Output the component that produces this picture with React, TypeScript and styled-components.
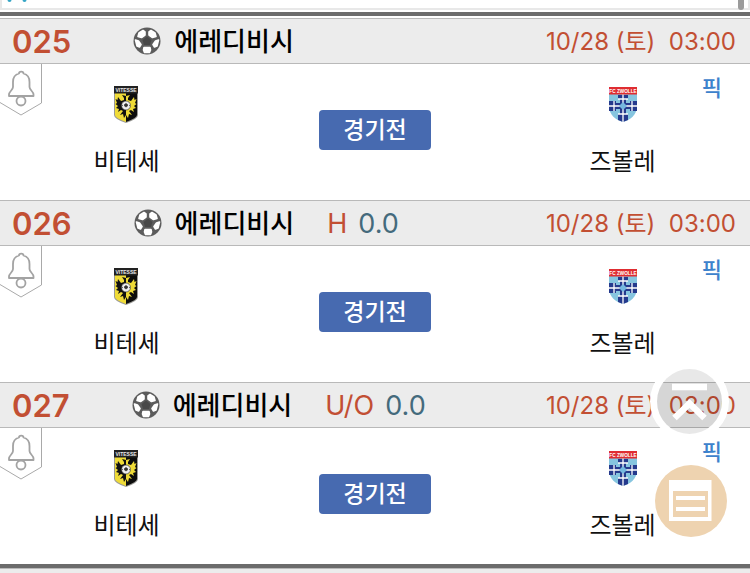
import React from "react";
import styled, { createGlobalStyle, css } from "styled-components";

const GlobalStyle = createGlobalStyle`
  * { box-sizing: border-box; }
  body {
    margin: 0;
    background: #fff;
    font-family: Inter, "Noto Sans CJK KR", sans-serif;
    overflow: hidden;
  }
`;

const TopStrip = styled.div`
  position: relative;
  height: 12px;
  background: #fff;
  overflow: hidden;
`;

const TopPanel = styled.div`
  height: 10px;
  border-left: 2px solid #e8e8e8;
  border-right: 2px solid #e8e8e8;
  border-bottom: 2px solid #e8e8e8;
  svg { display: block; margin-left: 5px; }
`;

const ScrollThumb = styled.div`
  position: absolute;
  top: 0;
  right: 6px;
  width: 6px;
  height: 10px;
  border-radius: 0 0 3px 3px;
  background: #9b9b9b;
`;

const Divider = styled.div`
  height: 4px;
  background: #6c6c6c;
`;

const List = styled.main`
  padding-top: 2px;
`;

const Header = styled.header`
  display: flex;
  align-items: center;
  height: 46px;
  padding: 0 14px 0 12px;
  background: #ececec;
  border-top: 1px solid #b9b9b9;
  border-bottom: 1px solid #b9b9b9;
  white-space: nowrap;
`;

const headerText = css`
  padding-top: 2px;
  line-height: 44px;
`;

const Num = styled.span`
  ${headerText}
  font-size: 31px;
  font-weight: 600;
  color: #c24f33;
  margin-right: 62px;
`;

const League = styled.h2`
  ${headerText}
  margin: 0 33px 0 13px;
  font-size: 26px;
  font-weight: 500;
  color: #000;
`;

const Kind = styled.span`
  ${headerText}
  font-size: 27px;
  color: #c24f33;
  margin-right: 11px;
`;

const Line = styled.span`
  ${headerText}
  font-size: 27px;
  color: #446a7c;
`;

const When = styled.time`
  ${headerText}
  margin-left: auto;
  font-size: 24px;
  color: #c24f33;
  white-space: pre;
`;

const Body = styled.div`
  position: relative;
  display: grid;
  grid-template-columns: 1fr 112px 1fr;
  align-items: start;
  height: 136px;
`;

const BellButton = styled.button`
  position: absolute;
  left: 0;
  top: 0;
  padding: 0;
  border: 0;
  background: none;
  svg { display: block; }
`;

const Team = styled.div<{ $away?: boolean }>`
  display: flex;
  flex-direction: column;
  align-items: center;
  padding: ${(p) => (p.$away ? "20px 65px 0 129px" : "20px 66px 0 0")};
  font-size: 24px;
  line-height: 34px;
  color: #111;
  svg { display: block; margin-bottom: 21px; }
`;

const Status = styled.button`
  height: 40px;
  margin-top: 46px;
  padding: 0;
  border: 0;
  border-radius: 4px;
  background: #476ab0;
  color: #fff;
  font-family: inherit;
  font-size: 23px;
  line-height: 40px;
  font-weight: 500;
`;

const Pick = styled.a`
  position: absolute;
  top: 8px;
  right: 28px;
  font-size: 22px;
  line-height: 32px;
  font-weight: 500;
  color: #3d82cc;
  text-decoration: none;
`;

const Floating = styled.div`
  position: fixed;
  right: 20px;
  top: 361px;
  display: flex;
  flex-direction: column;
  align-items: center;
  gap: 24px;
`;

const RoundButton = styled.button`
  padding: 0;
  border: 0;
  background: none;
  svg { display: block; }
`;

const NextHeader = styled.div`
  height: 5px;
  background: #ececec;
  border-top: 1px solid #b9b9b9;
`;

function Ball() {
  return (
    <svg width="28" height="28" viewBox="0 0 28 28" aria-hidden="true">
      <circle cx="14" cy="14" r="13.500" fill="#5c5c5c" />
      <g fill="#fff" stroke="#fff" strokeWidth="1.600" strokeLinejoin="round">
        <path d="M6 6 10 3.500 12 5 12 8 8.500 10.500 5 9.500Z" />
        <path d="M22 6 18 3.500 16 5 16 8 19.500 10.500 23 9.500Z" />
        <path d="M2.500 13 5.500 14 8 17.500 6.500 20 4 19Z" />
        <path d="M25.500 13 22.500 14 20 17.500 21.500 20 24 19Z" />
        <path d="M11 20.500H17L17.500 23 16.500 25.500H11.500L10.500 23Z" />
      </g>
      <path d="M14 9.500 18.500 13 17 18H11L9.500 13Z" fill="#484848" />
    </svg>
  );
}

function Bell() {
  return (
    <svg width="42" height="52" viewBox="0 0 42 52" fill="none" aria-hidden="true">
      <path d="M41.500 0V39L21 51 0 38.500" stroke="#a9a9a9" />
      <path
        d="M19 9.500C19 7 23.500 7 23.500 9.500 27.500 10.500 29.500 14 29.500 18V23C29.500 26 33.500 27.500 33.500 30.500V32H9V30.500C9 27.500 13 26 13 23V18C13 14 15 10.500 19 9.500Z"
        stroke="#a3a3a3"
        strokeWidth="1.800"
        strokeLinejoin="round"
      />
      <circle cx="21" cy="37" r="4.500" stroke="#a3a3a3" strokeWidth="1.800" />
    </svg>
  );
}

function VitesseCrest() {
  return (
    <svg width="26" height="40" viewBox="0 0 26 40" role="img" aria-label="Vitesse">
      <path d="M0 2H24V31Q24 35 12 39 0 35 0 31Z" fill="#9a9a96" />
      <path d="M1 9H12V38Q1 34 1 31Z" fill="#f0dc38" />
      <path d="M12 9H23V31Q23 34 12 38Z" fill="#0c0c0c" />
      <path d="M0 2H24V9.500H0Z" fill="#222" />
      <text x="12" y="8" fontSize="5" fontWeight="700" fill="#e8e8e8" textAnchor="middle" fontFamily="Liberation Sans">VITESSE</text>
      <path d="M12 12 8 11 10 14V16L7 17 4 13 3.500 16 1.500 15 3 19 1.500 20 4 22 2 24 5 25 4 28 7 26 9 27 6 31 9 30 10 34 12 31Z" fill="#111" />
      <path d="M12 12 16 11 14 14V16L17 17 20 13 20.500 16 22.500 15 21 19 22.500 20 20 22 22 24 19 25 20 28 17 26 15 27 18 31 15 30 14 34 12 31Z" fill="#eeda36" />
      <circle cx="12" cy="21.500" r="4.500" fill="#eee" stroke="#222" strokeWidth="0.600" />
      <path d="M10.500 20.500 12 19.500 13.500 20.500V22L12 23 10.500 22ZM8 21.500H9M15 21.500H16" fill="#333" stroke="#333" strokeWidth="0.700" />
    </svg>
  );
}

function ZwolleCrest() {
  return (
    <svg width="30" height="40" viewBox="0 0 30 40" role="img" aria-label="FC Zwolle">
      <path d="M1 10H29V22C29 31 22 36 15 38 8 36 1 31 1 22Z" fill="#86c5df" />
      <path d="M10 11H20V15H18V19H22V17H29V27H22V25H18V30H20V36L15 38 10 36V30H12V25H8V27H1V17H8V19H12V15H10Z" fill="#253a8d" />
      <path d="M15 10V19M15 25V38M1 22H12M18 22H29M10 15H20M10 30H20M6 17V27M24 17V27" stroke="#fff" strokeWidth="1.300" fill="none" />
      <path d="M15 18 19 22 15 26 11 22Z" fill="#75b8df" />
      <rect x="1" y="3" width="28" height="7.500" fill="#df2d31" />
      <text x="15" y="8.500" fontSize="4.700" fontWeight="700" fill="#fff" textAnchor="middle" fontFamily="Liberation Sans">FC ZWOLLE</text>
    </svg>
  );
}

interface Match {
  no: string;
  kind?: string;
  line?: string;
}

const matches: Match[] = [
  { no: "025" },
  { no: "026", kind: "H", line: "0.0" },
  { no: "027", kind: "U/O", line: "0.0" },
];

function MatchItem({ no, kind, line }: Match) {
  return (
    <article>
      <Header>
        <Num>{no}</Num>
        <Ball />
        <League>에레디비시</League>
        {kind && <Kind>{kind}</Kind>}
        {line && <Line>{line}</Line>}
        <When>{"10/28 (토)  03:00"}</When>
      </Header>
      <Body>
        <BellButton aria-label="알림"><Bell /></BellButton>
        <Team>
          <VitesseCrest />
          비테세
        </Team>
        <Status>경기전</Status>
        <Team $away>
          <ZwolleCrest />
          즈볼레
        </Team>
        <Pick href="#">픽</Pick>
      </Body>
    </article>
  );
}

export default function App() {
  return (
    <>
      <GlobalStyle />
      <TopStrip>
        <TopPanel>
          <svg width="20" height="3" viewBox="0 0 20 3" aria-hidden="true">
            <circle cx="2.500" cy="0" r="2" fill="#35a5c5" />
            <circle cx="17.500" cy="0" r="2" fill="#35a5c5" />
          </svg>
        </TopPanel>
        <ScrollThumb />
      </TopStrip>
      <Divider />
      <List>
        {matches.map((m) => (
          <MatchItem key={m.no} {...m} />
        ))}
      </List>
      <Divider />
      <NextHeader />
      <Floating>
        <RoundButton aria-label="맨 위로">
          <svg width="80" height="80" viewBox="0 0 80 80" fill="none">
            <circle cx="39.500" cy="40.500" r="36" stroke="#fff" strokeWidth="7" />
            <circle cx="39.500" cy="40.500" r="32.500" fill="#000" fillOpacity="0.09" />
            <path d="M22 26H57M24.500 57 39.500 42.500 54.500 57" stroke="#fff" strokeWidth="6.500" />
          </svg>
        </RoundButton>
        <RoundButton aria-label="목록">
          <svg width="74" height="73" viewBox="0 0 74 73">
            <circle cx="38" cy="36" r="36" fill="#eed3b0" />
            <path d="M16 15H58.500V56H16Z" fill="#fff" />
            <path d="M20 26H55V52H20Z" fill="#eed3b0" />
            <path d="M23 31H52V35H23ZM23 42H52V46H23Z" fill="#fff" />
          </svg>
        </RoundButton>
      </Floating>
    </>
  );
}
